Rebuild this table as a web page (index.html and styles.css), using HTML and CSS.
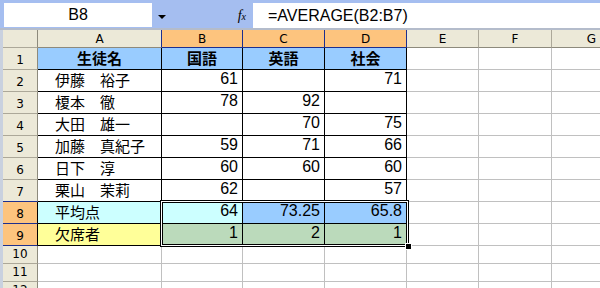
FILE: index.html
```html
<!DOCTYPE html>
<html lang="ja">
<head>
<meta charset="utf-8">
<link rel="stylesheet" href="styles.css">
</head>
<body>
<div class="app">
  <div class="toolbar">
    <div class="namebox">B8</div>
    <div class="fxzone"><span class="arrow"></span><span class="fx"><i>f</i><span class="sub">x</span></span></div>
    <div class="formula">=AVERAGE(B2:B7)</div>
  </div>
  <div class="sheet">
    <div class="row h">
      <div class="strip"></div>
      <div class="c rh corner"></div>
      <div class="c ch wa selnext">A</div>
      <div class="c ch wb sel">B</div>
      <div class="c ch wc sel">C</div>
      <div class="c ch wd sel">D</div>
      <div class="c ch we">E</div>
      <div class="c ch wf">F</div>
      <div class="c ch wg">G</div>
    </div>
    <div class="row">
      <div class="strip"></div>
      <div class="c rh">1</div>
      <div class="c t wa blue jp b ctr">生徒名</div>
      <div class="c t wb blue jp b ctr">国語</div>
      <div class="c t wc blue jp b ctr">英語</div>
      <div class="c t wd blue jp b ctr">社会</div>
      <div class="c we"></div><div class="c wf"></div><div class="c wg"></div>
    </div>
    <div class="row">
      <div class="strip"></div>
      <div class="c rh">2</div>
      <div class="c t wa jp name">伊藤　裕子</div>
      <div class="c t wb num">61</div>
      <div class="c t wc num"></div>
      <div class="c t wd num">71</div>
      <div class="c we"></div><div class="c wf"></div><div class="c wg"></div>
    </div>
    <div class="row">
      <div class="strip"></div>
      <div class="c rh">3</div>
      <div class="c t wa jp name">榎本　徹</div>
      <div class="c t wb num">78</div>
      <div class="c t wc num">92</div>
      <div class="c t wd num"></div>
      <div class="c we"></div><div class="c wf"></div><div class="c wg"></div>
    </div>
    <div class="row">
      <div class="strip"></div>
      <div class="c rh">4</div>
      <div class="c t wa jp name">大田　雄一</div>
      <div class="c t wb num"></div>
      <div class="c t wc num">70</div>
      <div class="c t wd num">75</div>
      <div class="c we"></div><div class="c wf"></div><div class="c wg"></div>
    </div>
    <div class="row">
      <div class="strip"></div>
      <div class="c rh">5</div>
      <div class="c t wa jp name">加藤　真紀子</div>
      <div class="c t wb num">59</div>
      <div class="c t wc num">71</div>
      <div class="c t wd num">66</div>
      <div class="c we"></div><div class="c wf"></div><div class="c wg"></div>
    </div>
    <div class="row">
      <div class="strip"></div>
      <div class="c rh">6</div>
      <div class="c t wa jp name">日下　淳</div>
      <div class="c t wb num">60</div>
      <div class="c t wc num">60</div>
      <div class="c t wd num">60</div>
      <div class="c we"></div><div class="c wf"></div><div class="c wg"></div>
    </div>
    <div class="row">
      <div class="strip"></div>
      <div class="c rh rsel-next">7</div>
      <div class="c t wa jp name">栗山　茉莉</div>
      <div class="c t wb num">62</div>
      <div class="c t wc num"></div>
      <div class="c t wd num">57</div>
      <div class="c we"></div><div class="c wf"></div><div class="c wg"></div>
    </div>
    <div class="row">
      <div class="strip"></div>
      <div class="c rh rsel">8</div>
      <div class="c t wa jp name cyan">平均点</div>
      <div class="c t wb num cyan">64</div>
      <div class="c t wc num selblue">73.25</div>
      <div class="c t wd num selblue">65.8</div>
      <div class="c we"></div><div class="c wf"></div><div class="c wg"></div>
    </div>
    <div class="row">
      <div class="strip"></div>
      <div class="c rh rsel">9</div>
      <div class="c t wa jp name yellow">欠席者</div>
      <div class="c t wb num selgreen">1</div>
      <div class="c t wc num selgreen">2</div>
      <div class="c t wd num selgreen">1</div>
      <div class="c we"></div><div class="c wf"></div><div class="c wg"></div>
    </div>
    <div class="row s">
      <div class="strip"></div>
      <div class="c rh">10</div>
      <div class="c wa"></div><div class="c wb"></div><div class="c wc"></div><div class="c wd"></div>
      <div class="c we"></div><div class="c wf"></div><div class="c wg"></div>
    </div>
    <div class="row s">
      <div class="strip"></div>
      <div class="c rh">11</div>
      <div class="c wa"></div><div class="c wb"></div><div class="c wc"></div><div class="c wd"></div>
      <div class="c we"></div><div class="c wf"></div><div class="c wg"></div>
    </div>
    <div class="row s">
      <div class="strip"></div>
      <div class="c rh">12</div>
      <div class="c wa"></div><div class="c wb"></div><div class="c wc"></div><div class="c wd"></div>
      <div class="c we"></div><div class="c wf"></div><div class="c wg"></div>
    </div>
    <div class="selection"><div class="handle"></div></div>
  </div>
</div>
</body>
</html>
```
FILE: styles.css
```css
html, body {
  margin: 0;
  padding: 0;
  background: #ffffff;
}
body {
  width: 600px;
  height: 288px;
  overflow: hidden;
  font-family: "Liberation Sans", Arial, sans-serif;
  color: #000;
}
.app {
  width: 600px;
}
.toolbar {
  display: flex;
  height: 30px;
  box-sizing: border-box;
  padding-top: 3px;
  background: #a5bef0;
  border-bottom: 2px solid #b4bccb;
}
.namebox {
  margin-left: 4px;
  width: 148px;
  height: 24px;
  background: #fff;
  display: flex;
  align-items: center;
  justify-content: center;
  font-size: 16px;
}
.fxzone {
  width: 101px;
  height: 25px;
  display: flex;
  align-items: center;
  justify-content: space-between;
  padding: 0 7px 0 6px;
  box-sizing: border-box;
}
.arrow {
  width: 0;
  height: 0;
  border-left: 4px solid transparent;
  border-right: 4px solid transparent;
  border-top: 4px solid #000;
  margin-top: 2px;
}
.fx {
  font-family: "Liberation Serif", serif;
  font-size: 14px;
  line-height: 1;
}
.fx .sub {
  font-size: 10px;
  font-style: italic;
}
.formula {
  flex: 1;
  height: 25px;
  background: #fff;
  display: flex;
  align-items: center;
  padding-left: 15px;
  font-size: 16px;
}
.sheet {
  position: relative;
}
.row {
  display: flex;
  height: 22px;
}
.row.h {
  height: 18px;
}
.row.s {
  height: 18px;
}
.strip {
  width: 3px;
  flex: none;
  background: #c9d1df;
}
.c {
  box-sizing: border-box;
  flex: none;
  border-right: 1px solid #c0c0c0;
  border-bottom: 1px solid #c0c0c0;
  display: flex;
  align-items: flex-end;
  padding: 0 3px 3px;
  white-space: nowrap;
  overflow: hidden;
  font-size: 16px;
  line-height: 16px;
}
.wa { width: 124px; }
.wb { width: 81px; }
.wc { width: 82px; }
.wd { width: 82px; }
.we { width: 72px; }
.wf { width: 73px; }
.wg { width: 80px; }

.rh {
  width: 35px;
  background: #ece9d8;
  border-right: 1px solid #8d8a7c;
  border-bottom: 1px solid #aca899;
  justify-content: center;
  font-family: "DejaVu Sans", sans-serif;
  font-size: 12px;
  line-height: 12px;
  padding: 0 0 3px;
}
.rh.rsel {
  background: #fdc47e;
  border-bottom-color: #1d2f8f;
  border-right-color: #000;
}
.rh.rsel-next {
  border-bottom-color: #1d2f8f;
}
.ch {
  background: #ece9d8;
  border-right: 1px solid #aca899;
  border-bottom: 1px solid #8d8a7c;
  justify-content: center;
  align-items: center;
  font-family: "DejaVu Sans", sans-serif;
  font-size: 12px;
  line-height: 12px;
  padding: 0;
}
.ch.sel {
  background: #fdc47e;
  border-right-color: #1d2f8f;
  border-bottom-color: #1d2f8f;
}
.ch.selnext {
  border-right-color: #1d2f8f;
}
.corner {
  padding: 0;
}
.t {
  border-right-color: #000;
  border-bottom-color: #000;
}
.jp {
  font-family: "Noto Sans CJK JP", sans-serif;
  font-size: 15px;
  line-height: 15px;
  padding-bottom: 4px;
}
.b {
  font-weight: bold;
}
.ctr {
  justify-content: center;
}
.name {
  padding-left: 17px;
}
.num {
  justify-content: flex-end;
  padding-right: 4px;
  padding-bottom: 4px;
}
.blue { background: #99ccff; }
.cyan { background: #ccffff; }
.yellow { background: #ffff99; }
.selblue { background: #99ccff; }
.selgreen { background: #bbdabb; }

.selection {
  position: absolute;
  left: 160px;
  top: 170px;
  width: 249px;
  height: 47px;
  box-sizing: border-box;
  border: 1px solid #000;
  box-shadow: inset 0 0 0 1px #fff, inset 0 0 0 2px #000;
  pointer-events: none;
}
.handle {
  position: absolute;
  right: -4px;
  bottom: -4px;
  width: 5px;
  height: 5px;
  background: #000;
  border: 1px solid #fff;
}
```
